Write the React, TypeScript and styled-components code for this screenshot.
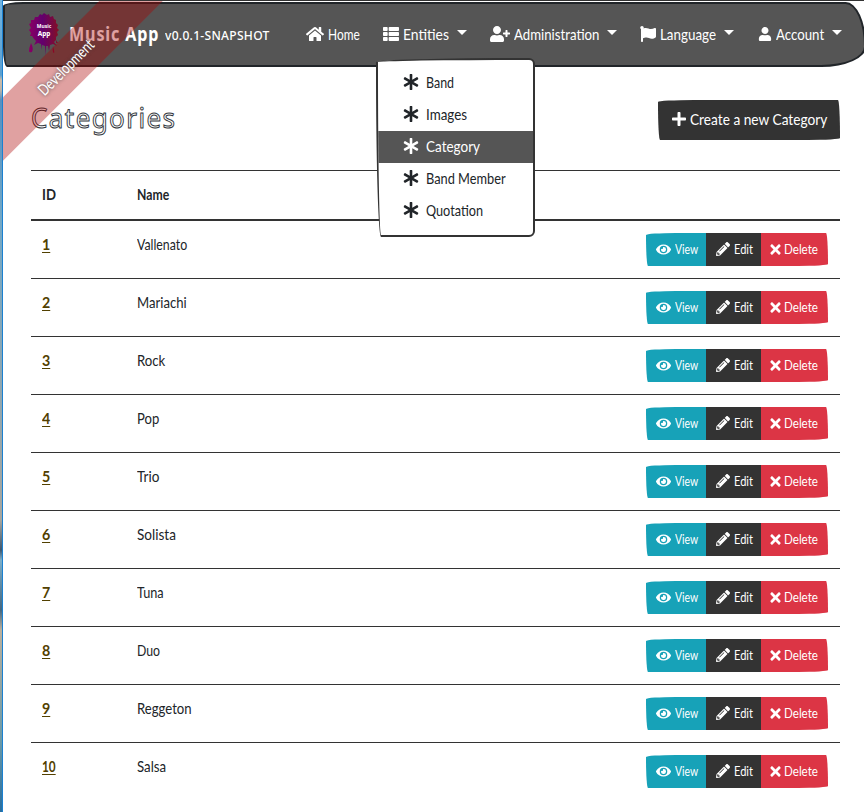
import React, { useLayoutEffect, useRef, useState } from 'react';
import styled, { createGlobalStyle, css } from 'styled-components';
import { FaHome, FaThList, FaUserPlus, FaFlag, FaUser, FaAsterisk, FaPlus, FaEye, FaPencilAlt, FaTimes } from 'react-icons/fa';

const Global = createGlobalStyle`
  * { box-sizing: border-box; }
  body { margin: 0; background: #fff; color: #212529; font: 16px/24px Lato, sans-serif; overflow: hidden; }
`;

const Slot = styled.span<{ $width: number }>`
  display: inline-block;
  flex: none;
  width: ${p => p.$width}px;
  white-space: nowrap;
  text-align: left;
`;
const Narrow = styled.span`
  display: inline-block;
  transform-origin: 0 50%;
  text-decoration: inherit;
  text-underline-offset: 2px;
`;

/* Condenses its text to the given width. */
function Label({ width, children, className }: { width: number; children: string; className?: string }) {
  const ref = useRef<HTMLSpanElement>(null);
  const [scale, setScale] = useState(1);
  useLayoutEffect(() => {
    if (ref.current) setScale(width / ref.current.offsetWidth);
  }, [width, children]);
  return (
    <Slot $width={width} className={className}>
      <Narrow ref={ref} style={{ transform: `scaleX(${scale})` }}>{children}</Narrow>
    </Slot>
  );
}

const Shell = styled.div`
  position: relative;
  display: flex;
  width: 864px;
  height: 812px;
  overflow: hidden;
`;
const Edge = styled.div`
  flex: none;
  width: 3px;
  border-right: 1px solid #1b80d0;
  background: linear-gradient(#72b4e1 0, #5ba0d0 75px, #cbbcaa 80px, #bdb4a8 90px, #5590c0 100px, #73a8c6 220px, #a8a69e 520px, #3e5870 550px, #7caec8 560px, #446780 610px, #bcb09c 630px, #6b9aa8 740px, #286ea0 812px);
`;
const Page = styled.div`
  position: relative;
  width: 861px;
  height: 812px;
  overflow: hidden;
  border-top: 1px solid #333;
`;
const Navbar = styled.nav`
  display: flex;
  align-items: center;
  width: 863px;
  height: 65px;
  margin-top: 1px;
  padding: 0 0 2px 23px;
  color: #fff;
  background: #555;
  border: 2px solid #212529;
  border-radius: 25px 25px 55px 5px / 5px 55px 25px 25px;
`;
const Logo = styled.svg`
  flex: none;
  width: 34px;
  height: 44px;
  margin: 0 8px 0 -1px;
`;
const Brand = styled(Label)`
  font: bold 19px/30px "Noto Sans", sans-serif;
  letter-spacing: 1px;
`;
const Version = styled(Label)`
  margin: 2px 36px 0 6px;
  font: 500 13px/20px "Noto Sans", sans-serif;
  letter-spacing: .3px;
`;
const NavItem = styled.a<{ $gap: number }>`
  display: flex;
  align-items: center;
  gap: 4px;
  margin-right: ${p => p.$gap}px;
  svg { flex: none; }
`;
const Caret = styled.i`
  margin: -2px 0 0 4px;
  border: 5px solid transparent;
  border-top-color: #fff;
  border-bottom: 0;
`;
const Ribbon = styled.div`
  position: absolute;
  left: -54px;
  top: 42px;
  width: 235px;
  height: 45px;
  display: flex;
  align-items: center;
  justify-content: center;
  color: #fff;
  background: rgba(170, 0, 0, .37);
  transform: rotate(-45deg);
  text-shadow: 0 0 4px #444;
`;
const RibbonText = styled(Label)`
  font-size: 16px;
  margin-right: 4px;
`;
const Main = styled.main`
  padding: 33px 24px 0 28px;
`;
const Heading = styled.header`
  display: flex;
  justify-content: space-between;
  height: 70px;
`;
const Title = styled(Label)`
  margin-top: -1px;
  font: 28px/36px "Noto Sans", sans-serif;
  letter-spacing: 1.5px;
  color: transparent;
  -webkit-text-stroke: 1px #33383e;
`;
const Create = styled.button`
  display: flex;
  align-items: center;
  gap: 3px;
  width: 182px;
  height: 40px;
  padding: 0 0 2px 13px;
  border: 0;
  color: #fff;
  background: #333;
  font: 16px/24px Lato, sans-serif;
  border-radius: 36px 2px 32px 2px / 2px 36px 2px 36px;
`;
const Row = styled.div<{ $head?: boolean; $first?: boolean }>`
  display: grid;
  grid-template-columns: 95px 1fr 182px;
  height: 58px;
  padding: 11px 12px 0 11px;
  border-top: 1px solid #333;
  ${p => p.$head && css`
    height: 51px;
    border-bottom: 2px solid #333;
    font-weight: bold;
  `}
  ${p => p.$first && css`
    height: 57px;
    border-top: 0;
  `}
`;
const Id = styled(Label)`
  color: #524000;
  font-weight: bold;
  text-decoration: underline;
`;
const Actions = styled.div`
  display: flex;
  height: 33px;
  margin-top: 1px;
  overflow: hidden;
  border-radius: 30px 2px 30px 2px / 2px 30px 2px 30px;
`;
const Action = styled.button<{ $color: string; $width: number }>`
  display: flex;
  align-items: center;
  gap: 4px;
  width: ${p => p.$width}px;
  padding: 0 0 1px 10px;
  border: 0;
  color: #fff;
  background: ${p => p.$color};
  font: 14px/20px Lato, sans-serif;
  svg { flex: none; }
`;
const CrossIcon = styled(FaTimes)`
  width: 13px;
  height: 15px;
  margin: 0 -2px 0 -2px;
`;
const Menu = styled.div`
  position: absolute;
  left: 376px;
  top: 58px;
  width: 159px;
  height: 179px;
  padding: 7px 0;
  overflow: hidden;
  background: #fff;
  border: 2px solid #333;
  border-radius: 150px 6px 6px 5px / 4px 6px 6px 170px;
`;
const MenuItem = styled.a<{ $active?: boolean }>`
  display: flex;
  align-items: center;
  gap: 7px;
  height: 32px;
  padding: 0 0 2px 25px;
  color: ${p => (p.$active ? '#fff' : '#212529')};
  background: ${p => (p.$active ? '#555' : 'transparent')};
`;

const categories: [string, number][] = [['Vallenato', 50], ['Mariachi', 50], ['Rock', 28], ['Pop', 22], ['Trio', 22], ['Solista', 39], ['Tuna', 27], ['Duo', 23], ['Reggeton', 55], ['Salsa', 29]];
const menu: [string, number][] = [['Band', 28], ['Images', 41], ['Category', 54], ['Band Member', 80], ['Quotation', 57]];

export default function App() {
  return (
    <Shell>
      <Global />
      <Edge />
      <Page>
        <Navbar>
          <Logo viewBox="0 0 34 44">
            <defs>
              <linearGradient id="splat" x2="1" y2="0">
                <stop offset="0" stopColor="#8b0064" />
                <stop offset=".45" stopColor="#62006d" />
                <stop offset="1" stopColor="#850f22" />
              </linearGradient>
            </defs>
            <path fill="url(#splat)" d="M2 12l2-1 0-3 3 0 1-3 3 0 2-3 2 1 2-2 3 2 2-1 1 3 3-1 1 3 2 1 0 3 2 2-1 3 2 2-2 2 1 3-2 2 0 3-2 2 3 4-4-2-3 1-1 6-1-5-2 0 0 10-1-10-3-1 0 5-1-6-3-1-4 2 2-4-2-2-2-3-2 0 1-3-2-3 2-2zM4 31q3 6 1 9-3 1-3-1 0-3 2-8zM29 28l2 3-2 0zM26 34q2 7 1 7-2 0-1-7z" />
            <g fill="#fff" fontFamily="Noto Sans" fontWeight="bold" textAnchor="middle">
              <text x="17" y="16" fontSize="5">Music</text>
              <text x="17" y="24" fontSize="6.500">App</text>
            </g>
          </Logo>
          <Brand width={90}>Music App</Brand>
          <Version width={105}>v0.0.1-SNAPSHOT</Version>
          <NavItem $gap={23}><FaHome size={18} /><Label width={32}>Home</Label></NavItem>
          <NavItem $gap={23}><FaThList size={16} /><Label width={46}>Entities</Label><Caret /></NavItem>
          <NavItem $gap={23}><FaUserPlus size={20} /><Label width={85}>Administration</Label><Caret /></NavItem>
          <NavItem $gap={24}><FaFlag size={16} /><Label width={56}>Language</Label><Caret /></NavItem>
          <NavItem $gap={0}><FaUser size={14} /><Label width={48}>Account</Label><Caret /></NavItem>
        </Navbar>
        <Main>
          <Heading>
            <Title width={145}>Categories</Title>
            <Create><FaPlus size={16} /><Label width={137}>Create a new Category</Label></Create>
          </Heading>
          <Row $head><Label width={14}>ID</Label><Label width={32}>Name</Label></Row>
          {categories.map(([name, width], i) => (
            <Row key={name} $first={i === 0}>
              <Id width={i === 9 ? 14 : 8}>{String(i + 1)}</Id>
              <Label width={width}>{name}</Label>
              <Actions>
                <Action $color="#17a2b8" $width={60}><FaEye size={15} /><Label width={23}>View</Label></Action>
                <Action $color="#333" $width={55}><FaPencilAlt size={14} /><Label width={19}>Edit</Label></Action>
                <Action $color="#dc3545" $width={67}><CrossIcon /><Label width={34}>Delete</Label></Action>
              </Actions>
            </Row>
          ))}
        </Main>
        <Ribbon><RibbonText width={72}>Development</RibbonText></Ribbon>
      </Page>
      <Menu>
        {menu.map(([name, width]) => (
          <MenuItem key={name} $active={name === 'Category'}><FaAsterisk size={16} /><Label width={width}>{name}</Label></MenuItem>
        ))}
      </Menu>
    </Shell>
  );
}
